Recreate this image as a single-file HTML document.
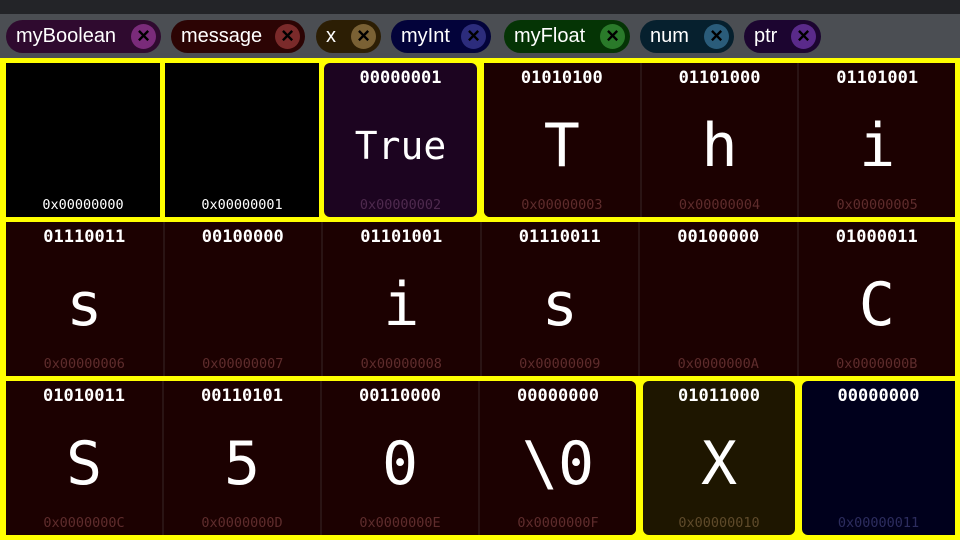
<!DOCTYPE html>
<html><head><meta charset="utf-8"><style>
*{margin:0;padding:0;box-sizing:border-box}
body{width:960px;height:540px;overflow:hidden;background:#4b4e53;position:relative;font-family:"Liberation Sans",sans-serif}
.top{position:absolute;left:0;top:0;width:960px;height:14px;background:#232428}
.pill{position:absolute;top:20px;height:33px;border-radius:17px;color:#fff;font-size:20px;line-height:33px;padding-left:10px}
.pill .x{position:absolute;right:5px;top:4px;width:25px;height:25px;border-radius:50%;color:#000;font-size:22px;font-weight:bold;line-height:24px;text-align:center}
.grid{position:absolute;left:0;top:58px;width:960px;height:482px;background:#ffff00}
.grp{position:absolute;display:flex;gap:2px;background:#2a1414;overflow:hidden}
.c{position:absolute;color:#fff;font-family:"DejaVu Sans Mono","Liberation Mono",monospace;text-align:center}
.grp .c{position:relative;flex:1;height:100%}
.b{position:absolute;top:5px;left:0;right:0;font-size:17px;font-weight:bold}
.v{position:absolute;top:47px;left:0;right:0;font-size:60px;line-height:72px}
.a{position:absolute;top:134px;left:0;right:0;font-size:13.5px}
.m{background:#1c0101}.m .a{color:#5e2c2c}
</style></head><body>
<div class="top"></div>
<div class="pill" style="left:6px;width:155px;background:#2f0a2f">myBoolean<span class="x" style="background:#7a2b7a">×</span></div>
<div class="pill" style="left:171px;width:134px;background:#2c0404">message<span class="x" style="background:#7a2a2a">×</span></div>
<div class="pill" style="left:316px;width:65px;background:#2c1e04">x<span class="x" style="background:#7a6134">×</span></div>
<div class="pill" style="left:391px;width:100px;background:#03033a">myInt<span class="x" style="background:#2c2c7c">×</span></div>
<div class="pill" style="left:504px;width:126px;background:#053405">myFloat<span class="x" style="background:#2a7a2a">×</span></div>
<div class="pill" style="left:640px;width:94px;background:#06202e">num<span class="x" style="background:#2a5c7a">×</span></div>
<div class="pill" style="left:744px;width:77px;background:#1c0530">ptr<span class="x" style="background:#5a2a8a">×</span></div>
<div class="grid">
<div class="c" style="left:6px;top:5px;width:154px;height:154px;background:#000"><div class="a">0x00000000</div></div>
<div class="c" style="left:165px;top:5px;width:154px;height:154px;background:#000"><div class="a">0x00000001</div></div>
<div class="c" style="left:324px;top:5px;width:153px;height:154px;background:#1c0420;border-radius:6px"><div class="b">00000001</div><div class="v" style="font-size:38px">True</div><div class="a" style="color:#4e2a4e">0x00000002</div></div>
<div class="grp" style="left:484px;top:5px;width:471px;height:154px;border-bottom-left-radius:6px">
<div class="c m"><div class="b">01010100</div><div class="v">T</div><div class="a">0x00000003</div></div>
<div class="c m"><div class="b">01101000</div><div class="v">h</div><div class="a">0x00000004</div></div>
<div class="c m"><div class="b">01101001</div><div class="v">i</div><div class="a">0x00000005</div></div>
</div>
<div class="grp" style="left:6px;top:164px;width:949px;height:154px">
<div class="c m"><div class="b">01110011</div><div class="v">s</div><div class="a">0x00000006</div></div>
<div class="c m"><div class="b">00100000</div><div class="v"></div><div class="a">0x00000007</div></div>
<div class="c m"><div class="b">01101001</div><div class="v">i</div><div class="a">0x00000008</div></div>
<div class="c m"><div class="b">01110011</div><div class="v">s</div><div class="a">0x00000009</div></div>
<div class="c m"><div class="b">00100000</div><div class="v"></div><div class="a">0x0000000A</div></div>
<div class="c m"><div class="b">01000011</div><div class="v">C</div><div class="a">0x0000000B</div></div>
</div>
<div class="grp" style="left:6px;top:323px;width:630px;height:154px;border-top-right-radius:6px;border-bottom-right-radius:6px">
<div class="c m"><div class="b">01010011</div><div class="v">S</div><div class="a">0x0000000C</div></div>
<div class="c m"><div class="b">00110101</div><div class="v">5</div><div class="a">0x0000000D</div></div>
<div class="c m"><div class="b">00110000</div><div class="v">0</div><div class="a">0x0000000E</div></div>
<div class="c m"><div class="b">00000000</div><div class="v">\0</div><div class="a">0x0000000F</div></div>
</div>
<div class="c" style="left:643px;top:323px;width:152px;height:154px;background:#1e1600;border-radius:6px"><div class="b">01011000</div><div class="v">X</div><div class="a" style="color:#5e4a2a">0x00000010</div></div>
<div class="c" style="left:802px;top:323px;width:153px;height:154px;background:#00001c;border-top-left-radius:6px;border-bottom-left-radius:6px"><div class="b">00000000</div><div class="a" style="color:#2c2c5e">0x00000011</div></div>
</div>
</body></html>
